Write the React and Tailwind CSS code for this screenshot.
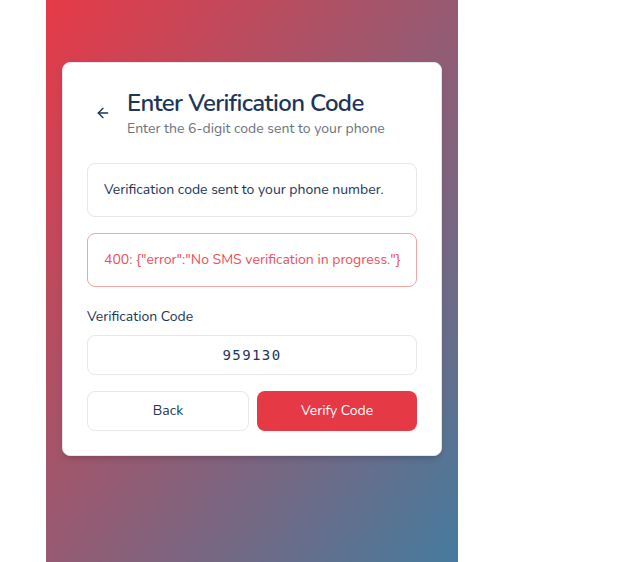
import React, { useState } from "react";
import { ArrowLeft } from "lucide-react";

const App = () => {
  const [code, setCode] = useState("959130");

  return (
    <div className="min-h-[562px] bg-white font-['Nunito','Lato','Noto_Sans',sans-serif]">
      <div className="ml-[46px] w-[412px] h-[562px] bg-linear-to-br/srgb from-[#e63946] to-[#457b9d] px-4 pt-[62px]">
        <div className="w-[380px] rounded-lg border border-[#e5e7eb] bg-white p-6 shadow-md">
          {/* header */}
          <div className="mb-6 flex items-center gap-2">
            <button className="flex h-8 w-8 items-center justify-center rounded-full text-[#1d3557]">
              <ArrowLeft size={16} strokeWidth={2} />
            </button>
            <div>
              <h1 className="text-2xl font-semibold leading-8 tracking-[-0.6px] text-[#1d3557]">
                Enter Verification Code
              </h1>
              <p className="text-sm text-[#6b7280]">
                Enter the 6-digit code sent to your phone
              </p>
            </div>
          </div>

          <div className="mb-4 rounded-lg border border-[#e5e7eb] p-4 text-sm text-[#1d3557]">
            Verification code sent to your phone number.
          </div>

          <div className="mb-5 whitespace-nowrap rounded-lg border border-[#f5a3a3] p-4 text-sm text-[#ef4e5a]">
            400: {'{"error":"No SMS verification in progress."}'}
          </div>

          <label className="mb-2 block text-sm text-[#1d3557]">
            Verification Code
          </label>
          <input
            value={code}
            onChange={(e) => setCode(e.target.value)}
            className="mb-4 block h-10 w-full rounded-lg border border-[#e5e7eb] text-center font-['DejaVu_Sans_Mono',monospace] text-sm tracking-widest text-[#1d3557] outline-none"
          />

          <div className="flex gap-2">
            <button className="h-10 flex-1 rounded-lg border border-[#e5e7eb] bg-white text-sm text-[#1d3557]">
              Back
            </button>
            <button className="h-10 flex-1 rounded-lg bg-[#e63946] text-sm text-white">
              Verify Code
            </button>
          </div>
        </div>
      </div>
    </div>
  );
};

export default App;
